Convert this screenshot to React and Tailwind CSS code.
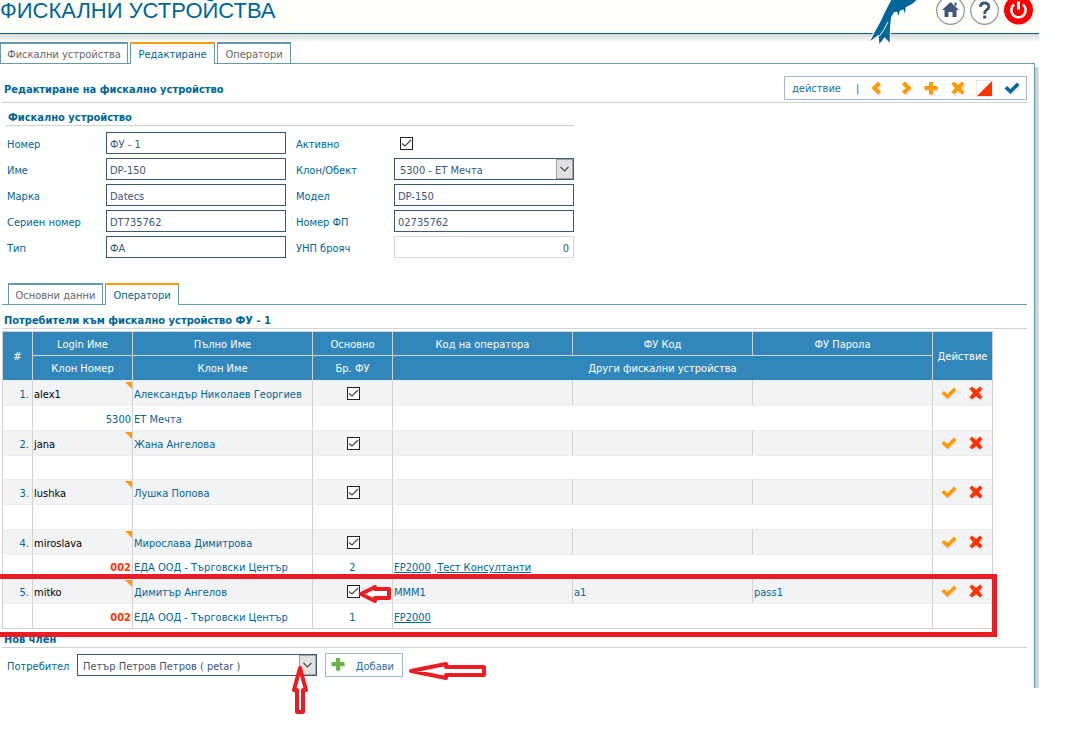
import React, { useState } from 'react';

const users = [
  { login: 'alex1', name: 'Александър Николаев Георгиев', branchNo: '5300', branch: 'ЕТ Мечта' },
  { login: 'jana', name: 'Жана Ангелова' },
  { login: 'lushka', name: 'Лушка Попова' },
  {
    login: 'miroslava', name: 'Мирослава Димитрова', branchNo: '002', alert: true,
    branch: 'ЕДА ООД - Търговски Център', count: 2, devices: ['FP2000', 'Тест Консултанти'],
  },
  {
    login: 'mitko', name: 'Димитър Ангелов', branchNo: '002', alert: true,
    branch: 'ЕДА ООД - Търговски Център', count: 1, devices: ['FP2000'],
    code: 'МММ1', fuCode: 'a1', password: 'pass1', marked: true,
  },
];

const shapes = {
  prev: 'M9 0.500 L12 3.500 L8 7 L12 10.500 L9 13.500 L2.500 7 Z',
  next: 'M9 0.500 L6 3.500 L10 7 L6 10.500 L9 13.500 L15.500 7 Z',
  plus: 'M6 1 H10 V5 H14.500 V9 H10 V13.500 H6 V9 H1.500 V5 H6 Z',
  cross: 'M4 0.500 L8 4 L12 0.500 L14.500 3 L11 7 L14.500 11 L12 13.500 L8 10 L4 13.500 L1.500 11 L5 7 L1.500 3 Z',
  check: 'M3 5 L6.500 8 L13 1.500 L15.500 4 L6.500 13 L0.500 7.500 Z',
};

function Icon({ shape, color }) {
  return (
    <svg width="16" height="16" viewBox="0 0 16 16" aria-hidden="true">
      <path d={shapes[shape]} fill="#e7e8ee" transform="translate(1 2)" />
      <path d={shapes[shape]} fill={color} />
    </svg>
  );
}

function IconButton({ label, shape, color }) {
  return (
    <button type="button" aria-label={label} className="flex w-[27px] justify-center pt-[2px]">
      <Icon shape={shape} color={color} />
    </button>
  );
}

function Tab({ active, width, children }) {
  return (
    <button
      type="button"
      className={`border-x border-t-2 border-x-[#6699ad] pt-[2px] text-center whitespace-nowrap ${width} ${
        active
          ? 'h-[22px] border-t-[#ff9900] bg-[#fdfffc] text-[#006699]'
          : 'h-[21px] border-t-[#6699ad] bg-white text-[#666666]'
      }`}
    >
      {children}
    </button>
  );
}

function Heading({ children }) {
  return <h2 className="border-b border-[#d0d2d0] px-[2px] leading-[14px] font-bold text-[#006699]">{children}</h2>;
}

function Checkbox(props) {
  return (
    <span className="relative inline-block size-[13px] align-middle">
      <input
        type="checkbox"
        defaultChecked
        className="peer block size-[13px] appearance-none border border-[#222222] bg-white"
        {...props}
      />
      <svg className="pointer-events-none absolute inset-0 hidden peer-checked:block" width="13" height="13" viewBox="0 0 13 13">
        <path d="M2 6.500 L5 9 L11 3" fill="none" stroke="#444444" strokeWidth="1.200" />
      </svg>
    </span>
  );
}

function Field({ id, label, value }) {
  return (
    <>
      <label htmlFor={id} className="pt-[3px] odd:pl-px nth-[4n+3]:pl-[10px]">{label}</label>
      <input
        id={id}
        defaultValue={value}
        className="h-[22px] w-full border border-[#40557a] bg-white px-[3px] pt-[2px] text-[#40557a]"
      />
    </>
  );
}

function Select({ id, width, options }) {
  return (
    <span className={`relative block h-[22px] ${width}`}>
      <select id={id} className="h-[22px] w-full appearance-none border border-[#40557a] bg-white pt-[3px] pr-5 pl-[5px] text-[#40557a]">
        {options.map((option) => <option key={option}>{option}</option>)}
      </select>
      <span className="pointer-events-none absolute top-px right-px flex h-5 w-[17px] items-center justify-center border border-[#a5a5a5] bg-[#e1e1e1]">
        <svg width="9" height="6" viewBox="0 0 9 6">
          <path d="M0.500 0.800 L4.500 4.800 L8.500 0.800" fill="none" stroke="#444444" strokeWidth="1.200" />
        </svg>
      </span>
    </span>
  );
}

function Arrow({ place, width, height, points }) {
  return (
    <svg className={`pointer-events-none absolute z-10 overflow-visible ${place}`} width={width} height={height} viewBox={`0 0 ${width} ${height}`}>
      <polygon points={points} fill="#ffffff" stroke="#ed1c24" strokeWidth="4" strokeLinejoin="round" />
    </svg>
  );
}

function Bird() {
  return (
    <svg className="absolute top-0 right-[119px]" width="54" height="46" viewBox="318 0 162 138" aria-hidden="true">
      <path
        d="M394 0 L470 0 Q458 13 444 18 L437 22 L435 41 L430 28 L420 32 L415 48 L412 35 L402 37 L393 52 L390 84 L389 128 L374 112 L358 132 L356 104 L331 123 Q346 92 361 66 Q378 28 394 0 Z"
        fill="#006699"
        stroke="#ffffff"
        strokeWidth="7"
        paintOrder="stroke"
      />
      <path d="M384 66 L370 92 L358 108" fill="none" stroke="#ffffff" strokeWidth="3" />
    </svg>
  );
}

function Header() {
  return (
    <header>
      <div className="relative flex h-[34px] items-start justify-between border-b border-[#006699] bg-[#fdfef8] pr-[6px]">
        <h1 className="font-['Liberation_Sans',sans-serif] text-[22px] leading-[22px] text-[#006699]">ФИСКАЛНИ УСТРОЙСТВА</h1>
        <nav className="-mt-[5px] flex gap-[5px]">
          <button type="button" aria-label="Начало">
            <svg width="29" height="29" viewBox="0 0 29 29">
              <circle cx="14.500" cy="14.500" r="13.800" fill="#ffffff" stroke="#999999" strokeWidth="1.300" />
              <path d="M14.500 6 L23 14 H20.500 V21 H16.500 V16 H12.500 V21 H8.500 V14 H6 Z M18.500 6.500 H20.500 V10.500 L18.500 9 Z" fill="#40557a" />
            </svg>
          </button>
          <button type="button" aria-label="Помощ">
            <svg width="29" height="29" viewBox="0 0 29 29">
              <circle cx="14.500" cy="14.500" r="13.800" fill="#ffffff" stroke="#999999" strokeWidth="1.300" />
              <path d="M10.500 11 Q10.500 7 14.500 7 Q18.800 7 18.800 10.500 Q18.800 12.800 16.500 14 Q14.700 15 14.700 18" fill="none" stroke="#40557a" strokeWidth="2.800" />
              <rect x="13.200" y="19.500" width="3" height="3" fill="#40557a" />
            </svg>
          </button>
          <button type="button" aria-label="Изход">
            <svg width="29" height="30" viewBox="0 0 29 30">
              <circle cx="14.500" cy="15" r="14.500" fill="#ff0000" />
              <path d="M10 9.500 A7.200 7.200 0 1 0 19 9.500" fill="none" stroke="#ffffff" strokeWidth="2.600" />
              <path d="M14.500 6.500 V14.500" stroke="#ffffff" strokeWidth="3" />
            </svg>
          </button>
        </nav>
        <Bird />
      </div>
      <div className="h-2 bg-linear-to-b from-[#d4d6d8] to-white" />
    </header>
  );
}

function UserRows({ user, index }) {
  const border = 'border-l border-t border-l-[#d0d2d0] border-t-[#ececec]';
  const cell = `${border} px-px pt-[3px]`;
  return (
    <>
      <tr className="h-[25px] bg-[#f2f3f5]">
        <td className={`${cell} pr-[3px] text-right`}>{index + 1}.</td>
        <td className={`${cell} relative text-black`}>
          {user.login}
          <svg className="absolute top-px right-0" width="7" height="7" viewBox="0 0 7 7">
            <path d="M0 0 H7 V7 Z" fill="#ff9900" />
          </svg>
        </td>
        <td className={cell}>{user.name}</td>
        <td className={`${border} relative pl-[2px] text-center leading-none`}>
          <Checkbox aria-label={`Основно ${user.login}`} />
          {user.marked && (
            <Arrow place="top-[5px] left-[46px]" width={34} height={20} points="2,10 16,3 16,5 30,5 30,14 16,14 16,17" />
          )}
        </td>
        <td className={cell}>{user.code}</td>
        <td className={cell}>{user.fuCode}</td>
        <td className={cell}>{user.password}</td>
        <td className={border}>
          <div className="flex justify-center">
            <IconButton label="Запис" shape="check" color="#ff9900" />
            <IconButton label="Изтриване" shape="cross" color="#ff3300" />
          </div>
        </td>
      </tr>
      <tr className={`bg-white ${index % 2 ? 'h-6' : 'h-[25px]'}`}>
        <td className={cell} />
        <td className={`${cell} text-right ${user.alert ? 'font-bold text-[#ff3300]' : ''}`}>{user.branchNo}</td>
        <td className={cell}>{user.branch}</td>
        <td className={`${cell} text-center`}>{user.count}</td>
        <td className={cell} colSpan={3}>
          {user.devices?.map((device, i) => (
            <React.Fragment key={device}>
              {i > 0 && ' ,'}
              <a href="#device" className="underline">{device}</a>
            </React.Fragment>
          ))}
        </td>
        <td className={cell} />
      </tr>
    </>
  );
}

function UsersTable() {
  const head = 'border-l border-t border-[#d0d2d0] pt-[2px] font-normal';
  return (
    <div className="relative mt-[2px] w-[991px]">
      <table className="w-full table-fixed border-separate border-spacing-0 border-r border-b border-[#d0d2d0]">
        <colgroup>
          <col className="w-[30px]" />
          <col className="w-[100px]" />
          <col className="w-[180px]" />
          <col className="w-[80px]" />
          <col className="w-[180px]" />
          <col className="w-[180px]" />
          <col className="w-[180px]" />
          <col className="w-[60px]" />
        </colgroup>
        <thead className="bg-[#3187bb] text-white">
          <tr className="h-6">
            <th rowSpan={2} className={head}>#</th>
            <th className={head}>Login Име</th>
            <th className={head}>Пълно Име</th>
            <th className={head}>Основно</th>
            <th className={head}>Код на оператора</th>
            <th className={head}>ФУ Код</th>
            <th className={head}>ФУ Парола</th>
            <th rowSpan={2} className={head}>Действие</th>
          </tr>
          <tr className="h-[25px]">
            <th className={head}>Клон Номер</th>
            <th className={head}>Клон Име</th>
            <th className={head}>Бр. ФУ</th>
            <th colSpan={3} className={head}>Други фискални устройства</th>
          </tr>
        </thead>
        <tbody>
          {users.map((user, index) => <UserRows key={user.login} user={user} index={index} />)}
        </tbody>
      </table>
      {/* frame round the last operator */}
      <div className="pointer-events-none absolute right-[-4px] bottom-[-8px] left-[-2px] z-10 h-[63px] border-y-[5px] border-r-[5px] border-[#ed1c24]" />
    </div>
  );
}

function App() {
  const [code, setCode] = useState('0');

  return (
    <div className="mr-[47px] min-h-screen font-['DejaVu_Sans_Condensed','Noto_Sans',sans-serif] text-[11px] leading-4 text-[#006699]">
      <Header />
      <div className="relative z-10 flex h-[22px] items-start gap-[2px]">
        <Tab width="w-[128px]">Фискални устройства</Tab>
        <Tab width="w-[85px]" active>Редактиране</Tab>
        <Tab width="w-[74px]">Оператори</Tab>
      </div>
      <div className="-mt-px flex">
        <main className="min-w-0 flex-1 border-t border-r border-[#6699ad] bg-[#fdfffc] pr-[7px] pb-[11px] pl-[2px]">
          <div className="flex items-end justify-between border-b border-[#d0d2d0] pt-3 pb-[2px]">
            <h2 className="px-[2px] pb-[2px] font-bold">Редактиране на фискално устройство</h2>
            <div className="flex h-6 items-center border border-[#a3b8d0] bg-white pr-px pl-[7px]">
              <span className="w-16 pt-[2px] text-[#1a6f9f]">действие</span>
              <span className="w-[7px] pt-[2px] text-[#40557a]">|</span>
              <IconButton label="Предишен" shape="prev" color="#ff9900" />
              <IconButton label="Следващ" shape="next" color="#ff9900" />
              <IconButton label="Нов" shape="plus" color="#ff9900" />
              <IconButton label="Изтриване" shape="cross" color="#ff9900" />
              <button type="button" aria-label="Изчистване" className="flex w-[27px] justify-center">
                <svg width="17" height="17" viewBox="0 0 17 17">
                  <rect x="0.500" y="0.500" width="16" height="16" fill="#ffffff" stroke="#e7e8ee" />
                  <path d="M16 1 V16 H1 Z" fill="#ff3300" />
                </svg>
              </button>
              <IconButton label="Запис" shape="check" color="#0b6799" />
            </div>
          </div>

          <form className="ml-1 w-[568px]" onSubmit={(e) => e.preventDefault()}>
            <div className="pt-2">
              <Heading>Фискално устройство</Heading>
            </div>
            <div className="mt-[6px] grid grid-cols-[100px_180px_108px_180px] items-center gap-y-1">
              <Field id="number" label="Номер" value="ФУ - 1" />
              <label htmlFor="active" className="pt-[3px] pl-[10px]">Активно</label>
              <div className="flex pl-[6px]"><Checkbox id="active" /></div>
              <Field id="name" label="Име" value="DP-150" />
              <label htmlFor="branch" className="pt-[3px] pl-[10px]">Клон/Обект</label>
              <Select id="branch" width="w-full" options={['5300 - ЕТ Мечта']} />
              <Field id="brand" label="Марка" value="Datecs" />
              <Field id="model" label="Модел" value="DP-150" />
              <Field id="serial" label="Сериен номер" value="DT735762" />
              <Field id="fp" label="Номер ФП" value="02735762" />
              <Field id="type" label="Тип" value="ФА" />
              <label htmlFor="unp" className="pt-[3px] pl-[10px]">УНП брояч</label>
              <input
                id="unp"
                value={code}
                onChange={(e) => setCode(e.target.value)}
                className="h-[22px] w-full border border-[#d8dad8] bg-white px-1 pt-[2px] text-right text-[#40557a]"
              />
            </div>
          </form>

          <div className="relative z-10 mt-[25px] flex h-[22px] items-start gap-[2px] pl-[6px]">
            <Tab width="w-[95px]">Основни данни</Tab>
            <Tab width="w-[74px]" active>Оператори</Tab>
          </div>
          <div className="-mt-px border-t border-[#6699ad] pt-[9px]">
            <Heading>Потребители към фискално устройство ФУ - 1</Heading>
          </div>
          <UsersTable />
          <div className="pt-1">
            <Heading>Нов член</Heading>
          </div>

          <form className="mt-[5px] flex items-center pl-[5px]" onSubmit={(e) => e.preventDefault()}>
            <label htmlFor="user" className="w-[70px] pt-[3px]">Потребител</label>
            <div className="relative">
              <Select id="user" width="w-[240px]" options={['Петър Петров Петров ( petar )']} />
              <Arrow place="top-[10px] right-[7px]" width={20} height={50} points="10,4 16,26 13,26 13,48 7,48 7,26 4,26" />
            </div>
            <div className="relative ml-2">
              <button type="submit" className="flex h-6 w-[78px] items-center justify-between border border-[#a3b8d0] bg-white pr-2 pl-1 text-[#1a6f9f]">
                <Icon shape="plus" color="#6ab344" />
                <span className="pt-[3px]">Добави</span>
              </button>
              <Arrow place="top-[8px] left-[83px]" width={80} height={20} points="3,10 38,3 38,6 76,6 76,14 38,14 38,17" />
            </div>
          </form>
        </main>
        <div className="mt-1 w-1 bg-linear-to-r from-[#c4c6c8] to-[#e2e2e6]" />
      </div>
    </div>
  );
}

export default App;
